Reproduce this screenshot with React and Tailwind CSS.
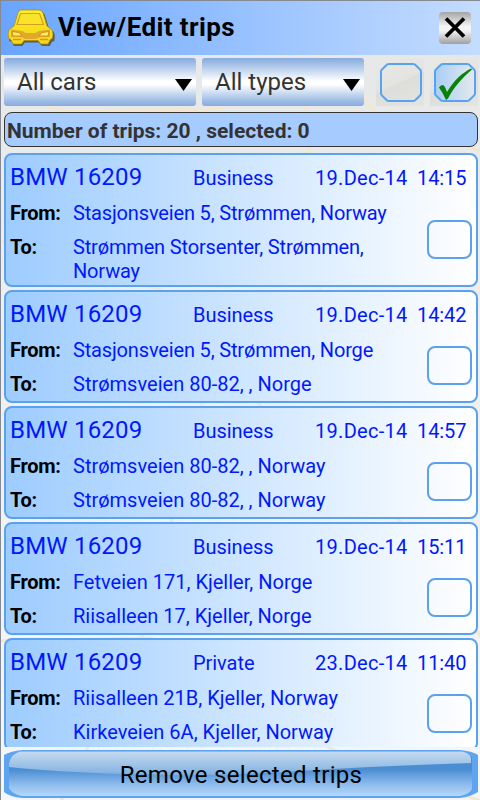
const trips = [
  {
    car: 'BMW 16209',
    type: 'Business',
    date: '19.Dec-14',
    time: '14:15',
    from: 'Stasjonsveien 5, Strømmen, Norway',
    to: 'Strømmen Storsenter, Strømmen, Norway',
  },
  {
    car: 'BMW 16209',
    type: 'Business',
    date: '19.Dec-14',
    time: '14:42',
    from: 'Stasjonsveien 5, Strømmen, Norge',
    to: 'Strømsveien 80-82, , Norge',
  },
  {
    car: 'BMW 16209',
    type: 'Business',
    date: '19.Dec-14',
    time: '14:57',
    from: 'Strømsveien 80-82, , Norway',
    to: 'Strømsveien 80-82, , Norway',
  },
  {
    car: 'BMW 16209',
    type: 'Business',
    date: '19.Dec-14',
    time: '15:11',
    from: 'Fetveien 171, Kjeller, Norge',
    to: 'Riisalleen 17, Kjeller, Norge',
  },
  {
    car: 'BMW 16209',
    type: 'Private',
    date: '23.Dec-14',
    time: '11:40',
    from: 'Riisalleen 21B, Kjeller, Norway',
    to: 'Kirkeveien 6A, Kjeller, Norway',
  },
];

function CarIcon() {
  return (
    <svg width="48" height="38" viewBox="0 0 48 38" className="shrink-0">
      <defs>
        <linearGradient id="carBody" x1="0" y1="0" x2="0" y2="1">
          <stop offset="0" stopColor="#fff02c" />
          <stop offset="0.5" stopColor="#f6e11f" />
          <stop offset="1" stopColor="#f3d81c" />
        </linearGradient>
      </defs>
      <path
        d="M11 4 Q12 1.500 14 1.500 H33 Q35.500 1.500 37 5 L41 18 L46 22 Q47.500 24 46.500 31 L44 32 L42 36 H34 L31 32.500 H17 L14.500 36 H6 L4 32 L1.500 31 Q0.500 24 2 22 L7 18 Z"
        fill="#5f6140"
        transform="translate(0.800 1)"
      />
      <path
        d="M11 4 Q12 1 14 1 H32 Q34.500 1 36 4 L40 17 L45 21 Q46.500 24 45.500 29 L43 31 L41 35 H34 L31 31.500 H17 L14.500 35 H6 L4 31 L1.500 29 Q0.500 24 2 21 L7 17 Z"
        fill="url(#carBody)"
        stroke="#b18b16"
        strokeWidth="0.800"
      />
      <path d="M13.500 4.500 H32.500 L36.500 15.500 H10 Z" fill="#fae42b" stroke="#d5a01c" strokeWidth="1.200" />
      <path d="M4 20.500 L15 22 L19 24 H28 L32 22 L43 20.500 V28 H33 L29 30 H18 L14 28 H4 Z" fill="#e2a82a" />
      <path d="M5 22.500 L12 23.500 L15 27 H6 Z M42 22.500 L35 23.500 L32 27 H41 Z" fill="#fff45b" stroke="#d18f1d" />
      <path d="M6 30.500 H14 M33 30.500 H41" stroke="#d99625" strokeWidth="1.500" />
    </svg>
  );
}

// Faint street map that shows through between the panels
function MapBackdrop() {
  return (
    <svg className="absolute inset-0 -z-10" width="480" height="800" viewBox="0 0 480 800">
      <defs>
        <linearGradient id="land" x1="0" y1="0" x2="0" y2="1">
          <stop offset="0" stopColor="#e5e6e8" />
          <stop offset="0.400" stopColor="#efefed" />
          <stop offset="1" stopColor="#f5f6f9" />
        </linearGradient>
      </defs>
      <rect width="480" height="800" fill="url(#land)" />
      <g fill="none" stroke="#f1e7d2" strokeWidth="3">
        <path d="M0 85 L60 110 L220 108 L290 50 L340 60 L372 110 L480 150" />
        <path d="M0 240 L160 289 L260 405 L400 521 L480 636" />
        <path d="M300 50 L320 290 L200 404 L140 640 L60 800" />
        <path d="M0 640 L150 637 L330 748 L480 800" />
      </g>
    </svg>
  );
}

function Select({ label, className }) {
  return (
    <button
      className={`flex h-12 items-center justify-between rounded-[3px] bg-[linear-gradient(180deg,#86abdd_0%,#a9c4e8_15%,#ffffff_48%,#ffffff_55%,#a9c4e8_85%,#86abdd_100%)] pr-1 pl-[13px] text-[#333] ${className}`}
    >
      <span className="text-[24px] leading-[48px]">{label}</span>
      <svg width="17" height="12" viewBox="0 0 17 12" className="mt-1.5">
        <path d="M0 0 H17 L8.500 12 Z" fill="#000" />
      </svg>
    </button>
  );
}

function ToggleButton({ checked }) {
  return (
    <button className="size-12 bg-[linear-gradient(155deg,#e9e9e6_0%,#e3e4e1_50%,#dddeda_51%,#e4e4e1_100%)]">
      <svg width="48" height="48" viewBox="0 0 48 48">
        <defs>
          <linearGradient id="checkedFill">
            <stop offset="0" stopColor="#a9cef8" />
            <stop offset="1" stopColor="#e4e9ec" />
          </linearGradient>
        </defs>
        <path
          d="M13 6 H37 Q39 6 40 7.500 L44 11.500 Q45 12 45 14 V35 Q45 37 44 37.500 L40 41.500 Q39 43 37 43 H13 Q11 43 10 41.500 L6 37.500 Q5 37 5 35 V14 Q5 12 6 11.500 L10 7.500 Q11 6 13 6 Z"
          fill={checked ? 'url(#checkedFill)' : 'none'}
          stroke="#58a2f2"
          strokeWidth="2"
        />
        {checked && (
          <path
            d="M9 29.500 Q10 27 13 27 Q15 28 17 34 C24 22 32 15 41 10.500 L42 11.500 C32 20 24 29 18 40.500 L16 42 Q13 35 9 29.500 Z"
            fill="#078307"
          />
        )}
      </svg>
    </button>
  );
}

function Address({ text, className = '' }) {
  const tight = text.includes('mmen');
  return <span className={`${tight ? 'tracking-[-0.16px]' : 'tracking-[0.01px]'} ${className}`}>{text}</span>;
}

function TripCard({ trip }) {
  return (
    <div className="flex min-h-[113px] shrink-0 flex-col rounded-lg border-2 border-[#5aa2ee] bg-linear-to-r from-[#9dccff] to-white pb-0.5 pl-1 text-[20px] leading-6 text-[#0018ff]">
      <div className="flex h-[46px] items-baseline pt-[7px]">
        <span className="w-[183px] text-[24px] leading-[30px] tracking-[0.2px]">{trip.car}</span>
        <span className="w-[122px] tracking-[-0.05px]">{trip.type}</span>
        <span className="w-[102px] tracking-[0.3px]">{trip.date}</span>
        <span className="tracking-[-0.1px]">{trip.time}</span>
      </div>
      <div className="flex grow">
        <div className="w-[362px] shrink-0">
          <div className="flex h-[34px]">
            <span className="w-[63px] shrink-0 font-bold tracking-[-0.3px] text-black">From:</span>
            <Address text={trip.from} className="whitespace-nowrap" />
          </div>
          <div className="flex">
            <span className="w-[63px] shrink-0 font-bold tracking-[-0.3px] text-black">To:</span>
            <Address text={trip.to} />
          </div>
        </div>
        <div className="flex grow items-center justify-end pr-1 pb-1.5">
          <span className="h-[39px] w-[45px] rounded-lg border-2 border-[#5aa2ee]" />
        </div>
      </div>
    </div>
  );
}

function RemoveButton() {
  return (
    <button className="relative mt-[3px] h-12 w-[474px] shrink-0">
      <svg className="absolute inset-0" width="474" height="48" viewBox="0 0 474 48">
        <defs>
          <linearGradient id="glassBase" x1="0" y1="0" x2="0" y2="1">
            <stop offset="0" stopColor="#4a8dd2" />
            <stop offset="0.400" stopColor="#4a8dd2" />
            <stop offset="0.750" stopColor="#90bdee" />
            <stop offset="1" stopColor="#b5d7fb" />
          </linearGradient>
          <linearGradient id="glassShine" x1="0" y1="0" x2="0" y2="1">
            <stop offset="0" stopColor="#c5daf0" />
            <stop offset="1" stopColor="#7fb0e0" />
          </linearGradient>
        </defs>
        <path d="M18 0 H456 Q468 1 474 5 V42 Q466 47 456 48 H18 Q6 47 0 42 V5 Q7 1 18 0 Z" fill="#5da5f1" />
        <path d="M16 1.500 H458 Q466 3 468 8 V39 Q466 44 456 46 H18 Q8 44 5 38 V13 Q7 4 16 1.500 Z" fill="url(#glassBase)" />
        <path d="M16 1.500 H458 Q466 3 467 8 V13 Q370 16 280 22 Q200 27 120 24 Q50 22 5 17 V13 Q7 4 16 1.500 Z" fill="url(#glassShine)" />
      </svg>
      <span className="relative text-[24px] leading-[50px] tracking-[0.3px] text-black">Remove selected trips</span>
    </button>
  );
}

export default function App() {
  return (
    <div className="relative isolate flex h-[800px] w-[480px] flex-col overflow-hidden border-t border-l border-[#858a92] font-['Roboto',sans-serif]">
      <MapBackdrop />

      {/* Title bar */}
      <header className="flex h-[54px] shrink-0 items-center bg-linear-to-r from-[#69a5ff] to-[#c4dcff] pr-[9px] pl-1.5">
        <CarIcon />
        <h1 className="ml-[3px] grow pb-0.5 text-[26px] font-bold tracking-[0.4px] text-black">View/Edit trips</h1>
        <button className="flex size-8 items-center justify-center rounded-[4px] bg-[linear-gradient(180deg,#a5a5a5_0%,#f4f4f4_45%,#f4f4f4_58%,#a0a0a0_100%)]">
          <svg width="22" height="22" viewBox="0 0 22 22">
            <path d="M2 1.500 L20 19.500 M20 1.500 L2 19.500" stroke="#000" strokeWidth="3.800" />
          </svg>
        </button>
      </header>

      <div className="mt-[3px] flex shrink-0 gap-1.5 pl-[3px]">
        <Select label="All cars" className="w-48" />
        <Select label="All types" className="w-[162px]" />
        <div className="ml-1.5 flex gap-1.5">
          <ToggleButton />
          <ToggleButton checked />
        </div>
      </div>

      <div className="mt-1.5 ml-[3px] h-[35px] w-[474px] shrink-0 rounded-lg border border-[#333] bg-[#a5cbff] pl-0.5 text-[21px] leading-[36px] font-bold text-[#333]">
        Number of trips: 20 , selected: 0
      </div>

      <div className="mt-1.5 ml-[3px] flex h-[594px] w-[474px] shrink-0 flex-col gap-[3px] overflow-hidden">
        {trips.map((trip) => (
          <TripCard key={trip.time} trip={trip} />
        ))}
      </div>

      <div className="pl-[3px]">
        <RemoveButton />
      </div>
    </div>
  );
}
